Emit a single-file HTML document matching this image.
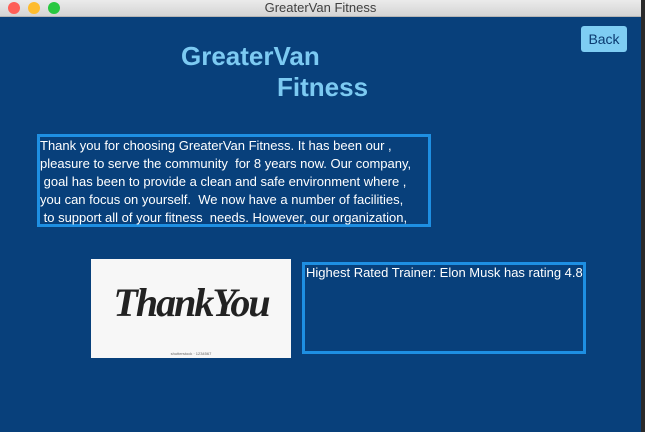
<!DOCTYPE html>
<html><head><style>
html,body{margin:0;padding:0;width:645px;height:432px;overflow:hidden;background:#2a2a2a;font-family:"Liberation Sans",sans-serif}
.win{position:absolute;left:0;top:0;width:641px;height:432px;background:#08407b}
.tb{position:absolute;left:0;top:0;width:641px;height:16px;background:linear-gradient(#ebebeb,#d4d4d4);border-bottom:1px solid #b5b5b5;text-align:center;font-size:13px;line-height:16px;color:#404040}
.dot{position:absolute;top:2px;width:12px;height:12px;border-radius:50%}
.t{position:absolute;color:#7ccaf2;font-weight:bold;font-size:26px}
.back{position:absolute;left:581px;top:26px;width:46px;height:26px;background:#7ecdf3;border-radius:3px;color:#0a3a70;font-size:14px;line-height:26px;text-align:center}
.box{position:absolute;border:3px solid #1e8fe2;box-sizing:border-box}
.txt{color:#fff;font-size:13px;line-height:18px;white-space:pre}
</style></head><body>
<div class="win">
<div class="tb">GreaterVan Fitness</div>
<div class="dot" style="left:8px;background:#fe5f57"></div>
<div class="dot" style="left:28px;background:#febc2e"></div>
<div class="dot" style="left:48px;background:#28c840"></div>
<div class="t" style="left:181px;top:41px">GreaterVan</div>
<div class="t" style="left:277px;top:72px">Fitness</div>
<div class="back">Back</div>
<div class="box" style="left:37px;top:134px;width:394px;height:93px"></div>
<div class="txt" style="position:absolute;left:40px;top:137px">Thank you for choosing GreaterVan Fitness. It has been our ,
pleasure to serve the community  for 8 years now. Our company,
 goal has been to provide a clean and safe environment where ,
you can focus on yourself.  We now have a number of facilities,
 to support all of your fitness  needs. However, our organization,</div>
<div style="position:absolute;left:91px;top:259px;width:200px;height:99px;background:#f7f7f7">
<div style="position:absolute;left:0;top:0;width:200px;height:88px;text-align:center;font-family:'Liberation Serif',serif;font-style:italic;font-weight:bold;font-size:40px;line-height:88px;color:#222;letter-spacing:-2px">ThankYou</div>
<div style="position:absolute;left:0;top:92px;width:200px;text-align:center;font-size:4px;color:#666">shutterstock · 1234567</div>
</div>
<div class="box" style="left:302px;top:262px;width:284px;height:92px"></div>
<div class="txt" style="position:absolute;left:306px;top:264px">Highest Rated Trainer: Elon Musk has rating 4.8</div>
</div>
</body></html>
